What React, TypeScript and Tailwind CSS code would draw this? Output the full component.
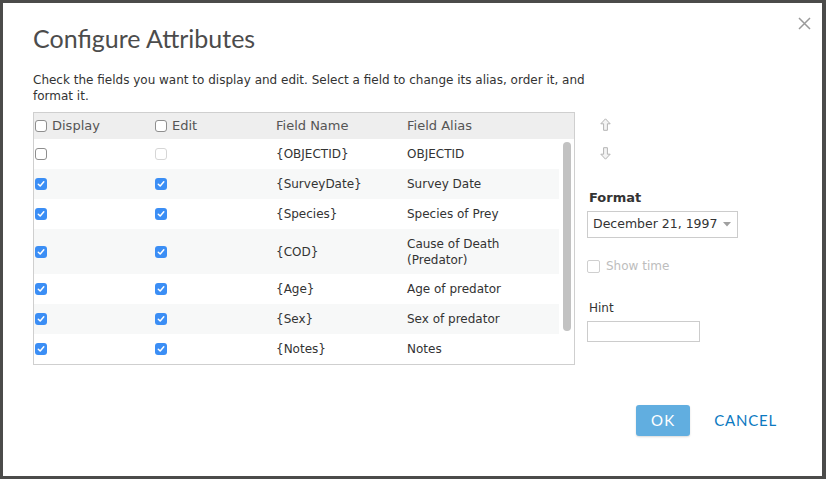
import React from 'react';

const rows = [
  { name: '{OBJECTID}', alias: ['OBJECTID'], display: false, edit: false, editDisabled: true, h: 'h-[30px]', bg: 'bg-white' },
  { name: '{SurveyDate}', alias: ['Survey Date'], display: true, edit: true, h: 'h-[30px]', bg: 'bg-[#f7f8f8]' },
  { name: '{Species}', alias: ['Species of Prey'], display: true, edit: true, h: 'h-[30px]', bg: 'bg-white' },
  { name: '{COD}', alias: ['Cause of Death', '(Predator)'], display: true, edit: true, h: 'h-[45px]', bg: 'bg-[#f7f8f8]' },
  { name: '{Age}', alias: ['Age of predator'], display: true, edit: true, h: 'h-[30px]', bg: 'bg-white' },
  { name: '{Sex}', alias: ['Sex of predator'], display: true, edit: true, h: 'h-[30px]', bg: 'bg-[#f7f8f8]' },
  { name: '{Notes}', alias: ['Notes'], display: true, edit: true, h: 'h-[30px]', bg: 'bg-white' },
];

function Check({ checked, disabled }: { checked?: boolean; disabled?: boolean }) {
  if (checked) {
    return (
      <span className="flex h-[12px] w-[12px] shrink-0 items-center justify-center rounded-[3px] bg-[#3b8ef5]">
        <svg width="8" height="8" viewBox="0 0 8 8">
          <path d="M1.3 4.2 L3.2 6 L6.8 1.8" fill="none" stroke="white" strokeWidth="1.5" strokeLinecap="round" strokeLinejoin="round" />
        </svg>
      </span>
    );
  }
  return (
    <span
      className={
        'block h-[12px] w-[12px] shrink-0 rounded-[3px] border bg-white ' +
        (disabled ? 'border-[#d6d6d6]' : 'border-[#8e8e8e]')
      }
    />
  );
}

function ArrowIcon({ down }: { down?: boolean }) {
  return (
    <svg width="11" height="13" viewBox="0 0 11 13" className={down ? 'rotate-180' : ''}>
      <path d="M5.5 0.8 L10.2 5.8 L7.4 5.8 L7.4 12.3 L3.6 12.3 L3.6 5.8 L0.8 5.8 Z" fill="#f4f4f4" stroke="#b3b3b3" strokeWidth="1" strokeLinejoin="round" />
    </svg>
  );
}

export default function App() {
  return (
    <div className="h-[479px] w-[826px] bg-[#4b4b4a] p-[3px]">
      <div
        className="relative h-[473px] w-[819px] bg-white text-[#333]"
        style={{ fontFamily: '"DejaVu Sans", Verdana, sans-serif' }}
      >
        <button className="absolute right-[10px] top-[13px] p-[1px]">
          <svg width="13" height="13" viewBox="0 0 13 13">
            <path d="M1 1 L12 12 M12 1 L1 12" stroke="#9a9a9a" strokeWidth="1.5" />
          </svg>
        </button>

        <div className="px-[30px] pt-[19px]">
          <h1 className="text-[25px] leading-[32px] text-[#4c4c4c]" style={{ fontFamily: 'Lato, "Open Sans", sans-serif' }}>
            Configure Attributes
          </h1>

          <p className="mt-[18px] w-[570px] text-[12px] leading-[16px] text-[#333]">
            Check the fields you want to display and edit. Select a field to change its alias, order it, and format it.
          </p>

          <div className="mt-[8px] flex">
            <div className="h-[253px] w-[542px] overflow-hidden border border-[#cfcfcf]">
              <div className="grid h-[26px] grid-cols-[121px_121px_131px_1fr] items-center bg-[#eeeeee] text-[13px] text-[#555]">
                <div className="flex items-center gap-[5px] pl-[1px]">
                  <Check />
                  <span>Display</span>
                </div>
                <div className="flex items-center gap-[5px]">
                  <Check />
                  <span>Edit</span>
                </div>
                <div>Field Name</div>
                <div>Field Alias</div>
              </div>

              <div className="flex">
                <div className="w-[525px]">
                  {rows.map((r) => (
                    <div
                      key={r.name}
                      className={'grid grid-cols-[121px_121px_131px_1fr] items-center text-[12px] text-[#333] ' + r.h + ' ' + r.bg}
                    >
                      <div className="pl-[1px]">
                        <Check checked={r.display} />
                      </div>
                      <div>
                        <Check checked={r.edit} disabled={r.editDisabled} />
                      </div>
                      <div>{r.name}</div>
                      <div className="leading-[16px]">
                        {r.alias.map((a) => (
                          <div key={a}>{a}</div>
                        ))}
                      </div>
                    </div>
                  ))}
                </div>
                <div className="flex-1 bg-white pl-[4px] pt-[3px]">
                  <div className="h-[189px] w-[8px] rounded-full bg-[#c2c2c2]" />
                </div>
              </div>
            </div>

            <div className="ml-[12px] flex flex-col">
              <div className="flex flex-col gap-[16px] pl-[13px] pt-[6px]">
                <ArrowIcon />
                <ArrowIcon down />
              </div>

              <div className="mt-[30px] text-[13px] font-bold leading-[16px] text-[#333]">
                <span className="pl-[2px]">Format</span>
              </div>
              <div className="mt-[5px] flex h-[27px] w-[151px] items-center justify-between border border-[#cccccc] pl-[5px] pr-[6px] text-[12.5px] text-[#333]">
                <span>December 21, 1997</span>
                <svg width="8" height="5" viewBox="0 0 8 5">
                  <path d="M0 0 L8 0 L4 4.5 Z" fill="#a0a0a0" />
                </svg>
              </div>

              <div className="mt-[19px] flex items-center gap-[6px] text-[12px] text-[#bdbdbd]">
                <span className="block h-[13px] w-[13px] rounded-[2px] border border-[#cfcfcf] bg-white" />
                <span>Show time</span>
              </div>

              <div className="mt-[25px] pl-[2px] text-[12px] leading-[16px] text-[#333]">Hint</div>
              <div className="mt-[5px] h-[21px] w-[113px] border border-[#cccccc] bg-white" />
            </div>
          </div>
        </div>

        <div className="absolute bottom-[40px] right-[45px] flex items-center gap-[24px]" style={{ fontFamily: 'Lato, "Open Sans", sans-serif' }}>
          <button className="h-[31px] w-[54px] rounded-[3px] bg-[#61aee0] text-[15px] tracking-[1.3px] text-white shadow-[0_1px_2px_rgba(0,0,0,0.15)]">
            OK
          </button>
          <button className="text-[15px] tracking-[0.8px] text-[#0b79c1]">CANCEL</button>
        </div>
      </div>
    </div>
  );
}
